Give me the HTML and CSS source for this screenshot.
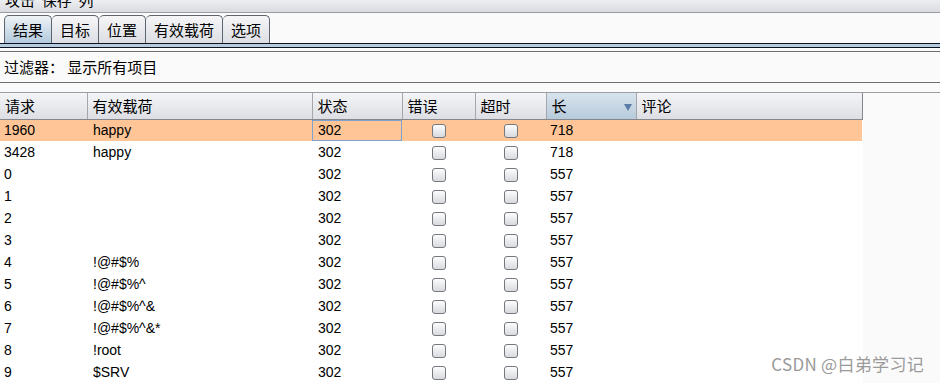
FILE: index.html
```html
<!DOCTYPE html>
<html lang="zh-CN">
<head>
<meta charset="UTF-8" />
<title>攻击结果</title>
<link rel="stylesheet" href="styles.css">
</head>
<body>

<!-- Menu bar (cut off at top) -->
<div class="menubar"><span>攻击&nbsp;&nbsp;保存&nbsp;&nbsp;列</span></div>

<!-- Tabs -->
<div class="tabs">
  <div class="tab active">结果</div>
  <div class="tab">目标</div>
  <div class="tab">位置</div>
  <div class="tab">有效载荷</div>
  <div class="tab">选项</div>
</div>
<div class="tab-rule"></div>

<div class="filter">过滤器：&nbsp;显示所有项目</div>

<div class="table-wrap">
  <table class="results">
    <colgroup>
      <col class="c-req"><col class="c-payload"><col class="c-status"><col class="c-err"><col class="c-timeout"><col class="c-len"><col class="c-comment">
    </colgroup>
    <thead>
      <tr>
        <th>请求</th>
        <th>有效载荷</th>
        <th>状态</th>
        <th>错误</th>
        <th>超时</th>
        <th class="sorted">长<span class="arrow"></span></th>
        <th>评论</th>
      </tr>
    </thead>
    <tbody id="rows"></tbody>
  </table>
</div>

<div class="watermark">CSDN @白弟学习记</div>

<script>
  const data = [
    ['1960', 'happy', '302', '718'],
    ['3428', 'happy', '302', '718'],
    ['0', '', '302', '557'],
    ['1', '', '302', '557'],
    ['2', '', '302', '557'],
    ['3', '', '302', '557'],
    ['4', '!@#$%', '302', '557'],
    ['5', '!@#$%^', '302', '557'],
    ['6', '!@#$%^&', '302', '557'],
    ['7', '!@#$%^&*', '302', '557'],
    ['8', '!root', '302', '557'],
    ['9', '$SRV', '302', '557']
  ];
  const tbody = document.getElementById('rows');
  data.forEach((r, i) => {
    const tr = document.createElement('tr');
    if (i === 0) tr.className = 'selected';
    const cells = [
      `<td>${r[0]}</td>`,
      `<td class="pl"></td>`,
      `<td class="st">${r[2]}</td>`,
      `<td class="chk"><span class="box"></span></td>`,
      `<td class="chk"><span class="box"></span></td>`,
      `<td>${r[3]}</td>`,
      `<td></td>`
    ];
    tr.innerHTML = cells.join('');
    tr.querySelector('.pl').textContent = r[1];
    tbody.appendChild(tr);
  });
</script>

</body>
</html>
```

FILE: styles.css
```css
* {
  margin: 0; padding: 0; box-sizing: border-box;
}
body {
  background: #fafafa;
  font-family: "Noto Sans CJK SC", "Liberation Sans", sans-serif;
  color: #000;
  width: 940px;
  height: 383px;
  overflow: hidden;
  position: relative;
}

/* Menu bar */
.menubar {
  height: 13px;
  overflow: hidden;
  background: linear-gradient(#eceef1, #d9dbe0);
  border-bottom: 1px solid #9a9ca2;
  padding-left: 5px;
  font-size: 15px;
  line-height: 20px;
}
.menubar span {
  display: block;
  margin-top: -10px;
}

/* Tabs */
.tabs {
  display: flex;
  padding: 2px 0 0 4px;
  height: 30px;
  align-items: flex-end;
}
.tab {
  height: 28px;
  line-height: 27px;
  font-size: 15px;
  padding: 0 8px;
  border: 1px solid #5c6470;
  border-bottom: none;
  border-left: none;
  border-radius: 5px 5px 0 0;
  background: linear-gradient(#f6f6f8, #dcdee3);
}
.tab:first-child {
  border-left: 1px solid #5c6470;
}
.tab.active {
  background: linear-gradient(#eef2f6, #b3cadd);
}
.tab-rule {
  height: 5px;
  background: #b6cbde;
  border-top: 1px solid #0b1322;
  border-bottom: 1px solid #0b1322;
}

/* Filter */
.filter {
  margin-top: 3px;
  height: 32px;
  border-top: 1px solid #6f6f6f;
  border-bottom: 1px solid #6f6f6f;
  padding-left: 4px;
  font-size: 15px;
  line-height: 30px;
}

/* Results table */
.table-wrap {
  margin-top: 9px;
  border-top: 1px solid #9c9ea4;
}
.results {
  width: 862px;
  border-collapse: collapse;
  table-layout: fixed;
  background: #fff;
  font-family: "Liberation Sans", Arial, sans-serif;
  font-size: 14px;
}
.c-req { width: 87px; }
.c-payload { width: 225px; }
.c-status { width: 90px; }
.c-err { width: 73px; }
.c-timeout { width: 71px; }
.c-len { width: 90px; }
.c-comment { width: 226px; }

.results th {
  height: 26px;
  text-align: left;
  font-weight: normal;
  font-family: "Noto Sans CJK SC", sans-serif;
  font-size: 15px;
  padding: 0 5px;
  background: linear-gradient(#f4f5f7, #dcdee3);
  border-right: 1px solid #a4a6ac;
  border-bottom: 1px solid #85878d;
}
.results th:last-child {
  border-right: 1px solid #85878d;
}
.results th.sorted {
  background: linear-gradient(#d8e3ec, #b6cadb);
  position: relative;
}
.arrow {
  position: absolute;
  right: 4px;
  top: 11px;
  border-left: 4px solid transparent;
  border-right: 4px solid transparent;
  border-top: 7px solid #5a7ca6;
}

.results td {
  height: 22px;
  padding: 0 4px;
  white-space: nowrap;
  overflow: hidden;
}
.results td.pl {
  padding-left: 6px;
}
.results td.st {
  padding-left: 6px;
}
.results tr.selected td {
  background: #ffc596;
}
.results tr.selected td.st {
  box-shadow: inset 0 0 0 1px #7da2cc;
}
.results td.chk {
  text-align: center;
  padding: 0;
}
.box {
  display: inline-block;
  width: 14px;
  height: 14px;
  border: 1px solid #74777e;
  border-radius: 3px;
  background: linear-gradient(#fdfdfd, #d8dade);
  vertical-align: middle;
}

/* Watermark */
.watermark {
  position: absolute;
  right: 16px;
  bottom: 7px;
  font-family: "Noto Sans CJK SC", sans-serif;
  font-size: 17px;
  color: #9a9a9a;
  letter-spacing: 0.3px;
}
```
